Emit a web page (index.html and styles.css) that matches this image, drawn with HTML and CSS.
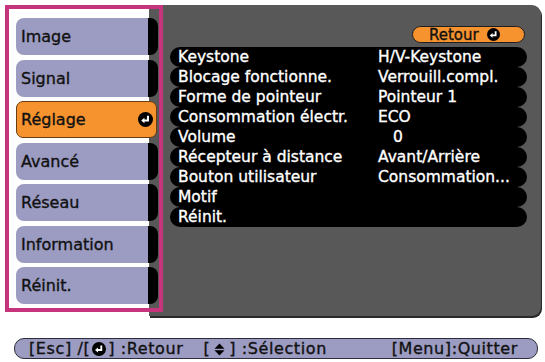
FILE: index.html
```html
<!DOCTYPE html>
<html lang="fr">
<head>
  <meta charset="UTF-8">
  <title>Réglage</title>
  <link rel="stylesheet" href="styles.css">
</head>
<body>
  <div class="screen">

    <!-- Menu + panel -->
    <div class="top">
      <ul class="menu">
        <li class="menu-item"><span class="label">Image</span><span class="tab"></span></li>
        <li class="menu-item"><span class="label">Signal</span><span class="tab"></span></li>
        <li class="menu-item active">
          <span class="label">Réglage
            <svg class="enter" viewBox="0 0 14 14"><circle cx="7" cy="7" r="7" fill="#000"/><path d="M9.3 3.4v4.6H5.4" stroke="#fff" stroke-width="1.9" fill="none"/><path d="M3 8l3-2.6v5.2z" fill="#fff"/></svg>
          </span>
        </li>
        <li class="menu-item"><span class="label">Avancé</span><span class="tab"></span></li>
        <li class="menu-item"><span class="label">Réseau</span><span class="tab"></span></li>
        <li class="menu-item"><span class="label">Information</span><span class="tab"></span></li>
        <li class="menu-item"><span class="label">Réinit.</span><span class="tab"></span></li>
      </ul>

      <div class="panel">
        <div class="back-row">
          <div class="back-btn">Retour
            <svg class="enter small" viewBox="0 0 14 14"><circle cx="7" cy="7" r="7" fill="#000"/><path d="M9.3 3.4v4.6H5.4" stroke="#fff" stroke-width="1.9" fill="none"/><path d="M3 8l3-2.6v5.2z" fill="#fff"/></svg>
          </div>
        </div>
        <ul class="settings">
          <li class="row"><span class="name">Keystone</span><span class="value">H/V-Keystone</span></li>
          <li class="row"><span class="name">Blocage fonctionne.</span><span class="value">Verrouill.compl.</span></li>
          <li class="row"><span class="name">Forme de pointeur</span><span class="value">Pointeur 1</span></li>
          <li class="row"><span class="name">Consommation électr.</span><span class="value">ECO</span></li>
          <li class="row"><span class="name">Volume</span><span class="value num">0</span></li>
          <li class="row"><span class="name">Récepteur à distance</span><span class="value">Avant/Arrière</span></li>
          <li class="row"><span class="name">Bouton utilisateur</span><span class="value">Consommation...</span></li>
          <li class="row"><span class="name">Motif</span><span class="value"></span></li>
          <li class="row"><span class="name">Réinit.</span><span class="value"></span></li>
        </ul>
      </div>
    </div>

    <!-- Help bar -->
    <div class="help-bar">
      <span class="help-left">[Esc] /[<svg class="enter help" viewBox="0 0 14 14"><circle cx="7" cy="7" r="7" fill="#000"/><path d="M9.3 3.4v4.6H5.4" stroke="#fff" stroke-width="1.9" fill="none"/><path d="M3 8l3-2.6v5.2z" fill="#fff"/></svg>] :Retour</span>
      <span class="help-mid">[<svg class="updown" viewBox="0 0 12 14"><path d="M6 0.5L11.5 6.2H0.5z M6 13.5L11.5 7.8H0.5z" fill="#000"/></svg>] :Sélection</span>
      <span class="help-right">[Menu]:Quitter</span>
    </div>

    <!-- Highlight frame around the menu -->
    <div class="frame"></div>
  </div>
</body>
</html>
```

FILE: styles.css
```css
/* General */
* {
  margin: 0;
  padding: 0;
  box-sizing: border-box;
}

body {
  background-color: #fff;
  font-family: "DejaVu Sans", sans-serif;
  color: #111;
  -webkit-text-stroke: 0.35px currentColor;
}

.screen {
  position: relative;
  width: 545px;
  height: 362px;
}

.top {
  display: flex;
  padding-top: 5px;
}

/* Left menu */
.menu {
  list-style: none;
  width: 133px;
  margin-left: 16px;
  padding-top: 13px;
  display: flex;
  flex-direction: column;
  gap: 4.5px;
  position: relative;
  z-index: 1;
}

.menu-item {
  display: flex;
  width: 142px;
  height: 37px;
  font-size: 16px;
}

.menu-item .label {
  flex: 1;
  display: flex;
  align-items: center;
  padding-left: 5px;
  background-color: #9c9cc2;
  border-radius: 8px 0 0 8px;
}

.menu-item .tab {
  width: 10px;
  background-color: #000;
  border-radius: 0 8px 8px 0;
}

.menu-item.active {
  width: 141px;
}

.menu-item.active .label {
  background-color: #f7932f;
  border: 1px solid #6b3d12;
  border-radius: 7px;
  padding-left: 4px;
  padding-right: 3px;
  justify-content: space-between;
}

.enter {
  width: 15px;
  height: 15px;
  display: block;
}

.enter.small {
  width: 13px;
  height: 13px;
  margin-left: 8px;
}

.enter.help {
  display: inline-block;
  width: 14px;
  height: 14px;
  vertical-align: -2px;
  margin: 0 2px;
}

/* Right panel */
.panel {
  width: 392px;
  height: 311px;
  background-color: #585858;
  border-radius: 0 9px 9px 0;
  box-shadow: 1px 2px 0 #2a2a2a;
  padding: 21px 14px 0 21px;
}

.back-row {
  display: flex;
  justify-content: flex-end;
  padding-right: 2px;
}

.back-btn {
  display: flex;
  align-items: center;
  width: 113px;
  height: 17px;
  padding-left: 16px;
  font-size: 15px;
  color: #111;
  background-color: #f7932f;
  border: 1px solid #1e1e1e;
  border-radius: 9px;
}

.settings {
  list-style: none;
  margin-top: 4px;
  width: 357px;
}

.row {
  display: flex;
  align-items: center;
  height: 20px;
  padding-left: 8px;
  background-color: #000;
  border-radius: 10px;
  color: #fff;
  font-size: 15.5px;
}

.row .name {
  width: 200px;
  white-space: nowrap;
}

.row .value {
  white-space: nowrap;
}

.row .value.num {
  padding-left: 15px;
}

/* Help bar */
.help-bar {
  display: flex;
  align-items: center;
  width: 524px;
  height: 21px;
  margin: 22px 0 0 14px;
  padding: 0 19px 0 14px;
  background-color: #9c9cc2;
  border: 1px solid #2c2c3a;
  border-radius: 10px;
  font-size: 16px;
  letter-spacing: 0.6px;
  white-space: nowrap;
}

.help-mid {
  margin-left: 20px;
}

.updown {
  display: inline-block;
  width: 11px;
  height: 13px;
  vertical-align: -2px;
  margin: 0 4px;
}

.help-right {
  margin-left: auto;
}

/* Pink highlight frame */
.frame {
  position: absolute;
  left: 5px;
  top: 5px;
  width: 158px;
  height: 307px;
  border: 4px solid #c6347c;
  z-index: 2;
}
```
